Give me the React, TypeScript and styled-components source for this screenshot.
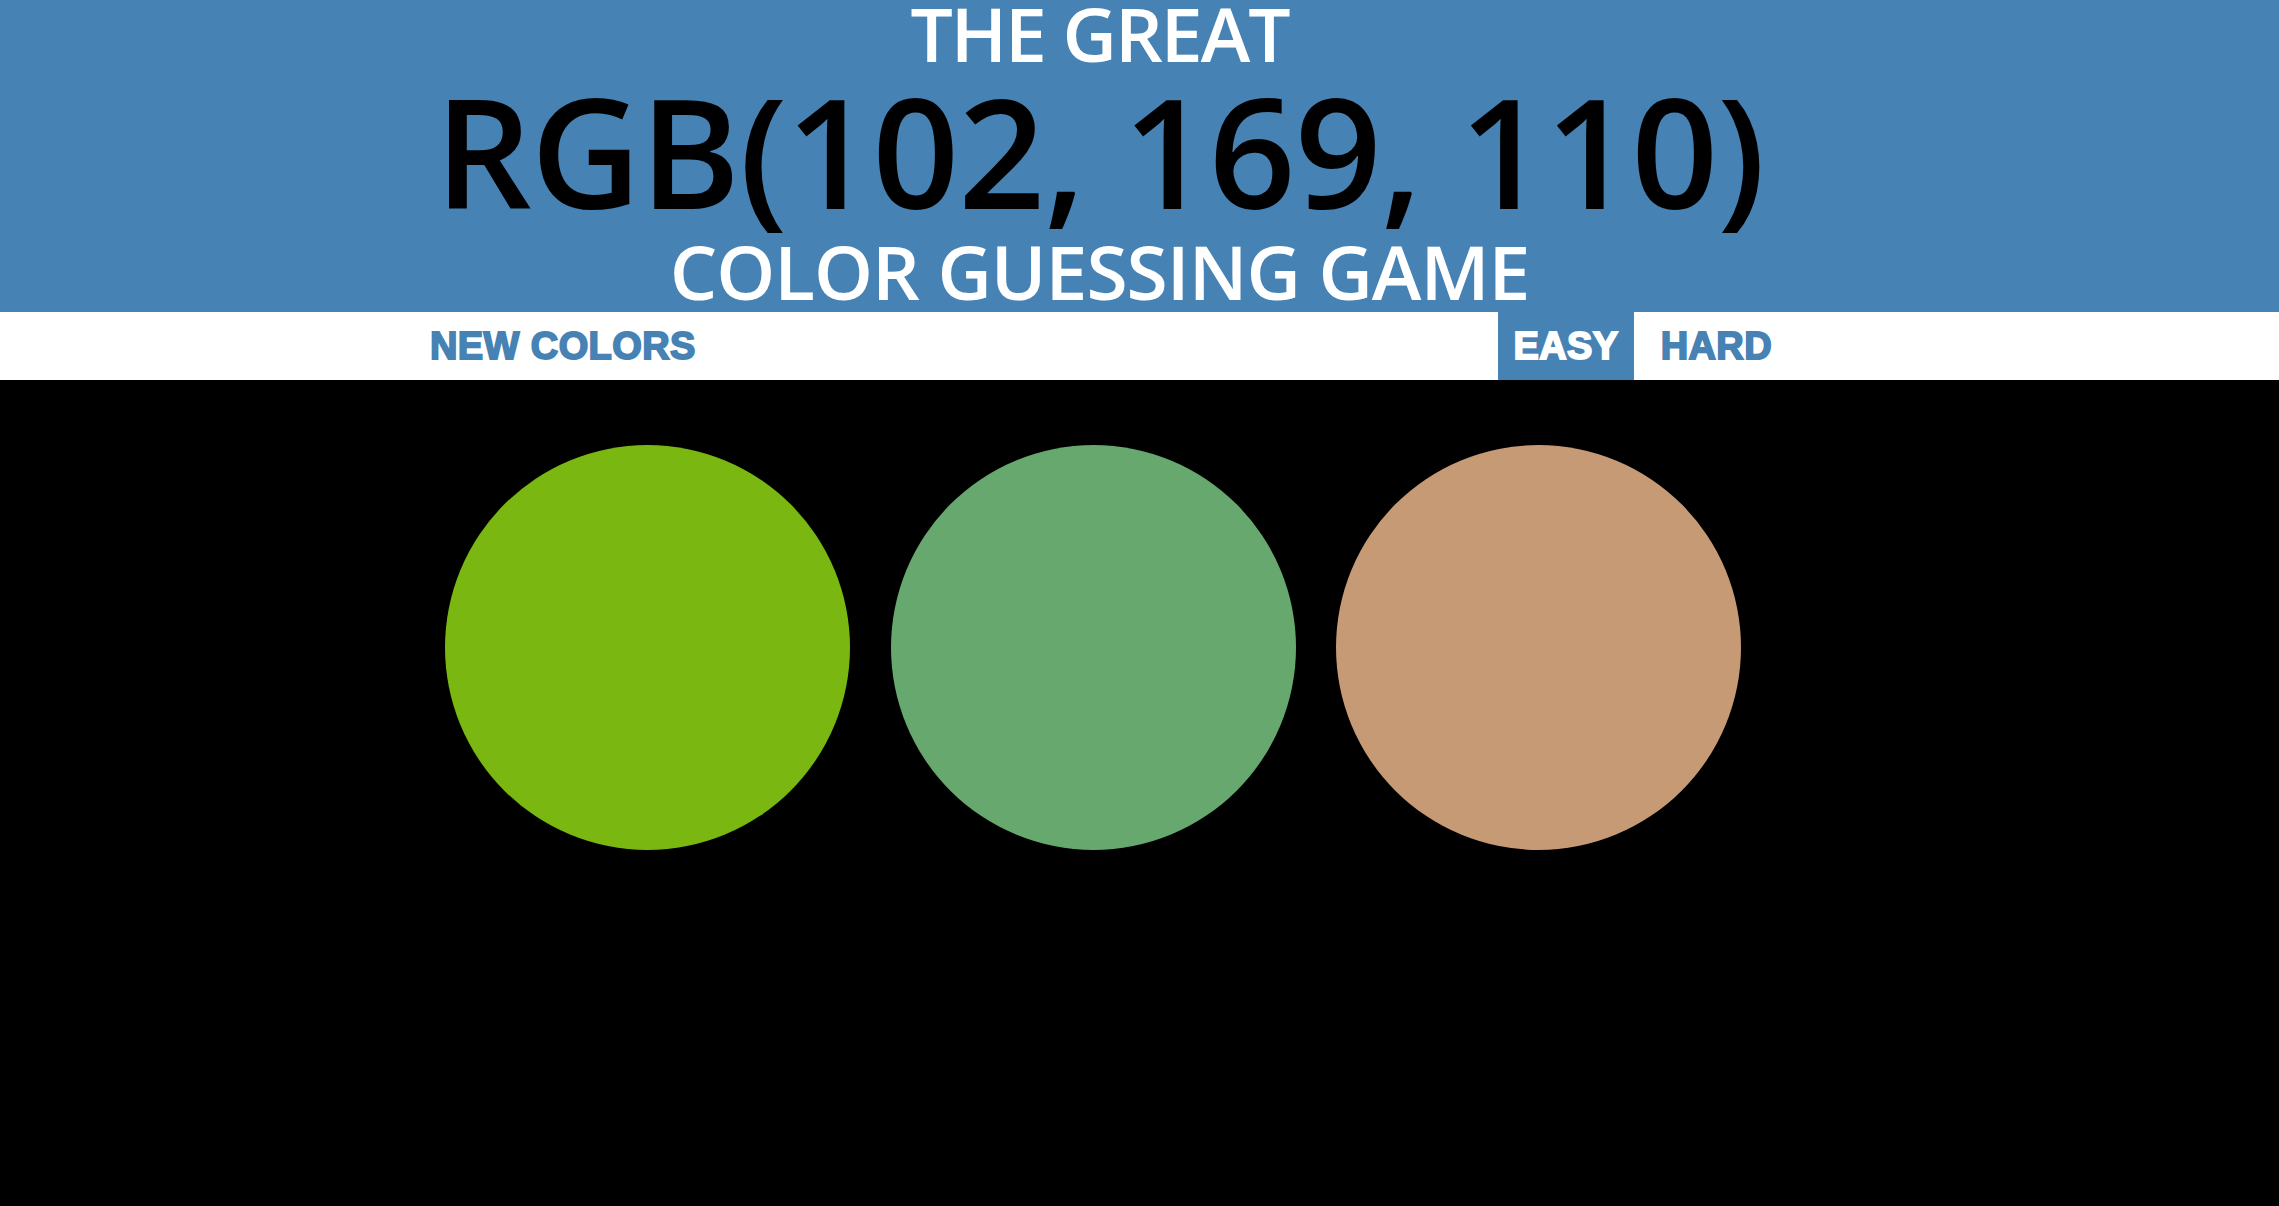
import React from "react";
import styled, { createGlobalStyle } from "styled-components";

const GlobalStyle = createGlobalStyle`
  html, body {
    margin: 0;
    padding: 0;
    background: #000;
  }
  body {
    font-family: "Open Sans", "Noto Sans", sans-serif;
    overflow: hidden;
  }
`;

const Page = styled.div`
  width: 100%;
  min-height: 1206px;
  background: #000;
`;

const Header = styled.header`
  background: #4682b4;
  color: #fff;
  padding-bottom: 5px;
`;

const Centered = styled.div<{ $w: number }>`
  width: ${(p) => p.$w}px;
  margin-left: calc(50% - 40px - ${(p) => p.$w / 2}px);
`;

const TitleLine = styled.div<{ $size: number; $lh: number; $ls: number; $dark?: boolean }>`
  font-family: "Open Sans", "Noto Sans", sans-serif;
  font-weight: 600;
  font-size: ${(p) => p.$size}px;
  line-height: ${(p) => p.$lh}px;
  letter-spacing: ${(p) => p.$ls}px;
  text-align: center;
  text-transform: uppercase;
  white-space: nowrap;
  color: ${(p) => (p.$dark ? "#000" : "#fff")};
`;

const Stripe = styled.nav`
  background: #fff;
  height: 68px;
`;

const StripeInner = styled(Centered)`
  height: 100%;
  display: flex;
  align-items: stretch;
`;

const NavButton = styled.button<{ $selected?: boolean }>`
  border: none;
  outline: none;
  margin: 0;
  padding: 0 15px 0 16px;
  height: 100%;
  font-family: "Liberation Sans", Arial, sans-serif;
  font-weight: 700;
  font-size: 38px;
  letter-spacing: 0.4px;
  text-transform: uppercase;
  -webkit-text-stroke: 1.8px currentColor;
  background: ${(p) => (p.$selected ? "#4682b4" : "#fff")};
  color: ${(p) => (p.$selected ? "#fff" : "#4682b4")};
  cursor: pointer;
`;

const Modes = styled.div`
  margin-left: auto;
  margin-right: -2px;
  display: flex;
  gap: 11px;
`;

const Board = styled.main`
  padding-top: 65px;
`;

const Row = styled(Centered)`
  display: flex;
  gap: 40.5px;
  padding-left: 31px;
  box-sizing: border-box;
`;

const Swatch = styled.div<{ $color: string }>`
  width: 405px;
  height: 405px;
  border-radius: 50%;
  background: ${(p) => p.$color};
  flex: none;
`;

const colors = ["rgb(122, 183, 16)", "rgb(102, 168, 110)", "rgb(197, 154, 117)"];

export default function App() {
  return (
    <Page>
      <GlobalStyle />
      <Header>
        <Centered $w={1600}>
          <TitleLine $size={75} $lh={67} $ls={-2}>The Great</TitleLine>
          <TitleLine $size={152} $lh={168} $ls={-1} $dark>RGB(102, 169, 110)</TitleLine>
          <TitleLine $size={75} $lh={72} $ls={-1}>Color Guessing Game</TitleLine>
        </Centered>
      </Header>
      <Stripe>
        <StripeInner $w={1371}>
          <NavButton>New Colors</NavButton>
          <Modes>
            <NavButton $selected>Easy</NavButton>
            <NavButton>Hard</NavButton>
          </Modes>
        </StripeInner>
      </Stripe>
      <Board>
        <Row $w={1371}>
          {colors.map((c) => (
            <Swatch key={c} $color={c} />
          ))}
        </Row>
      </Board>
    </Page>
  );
}
